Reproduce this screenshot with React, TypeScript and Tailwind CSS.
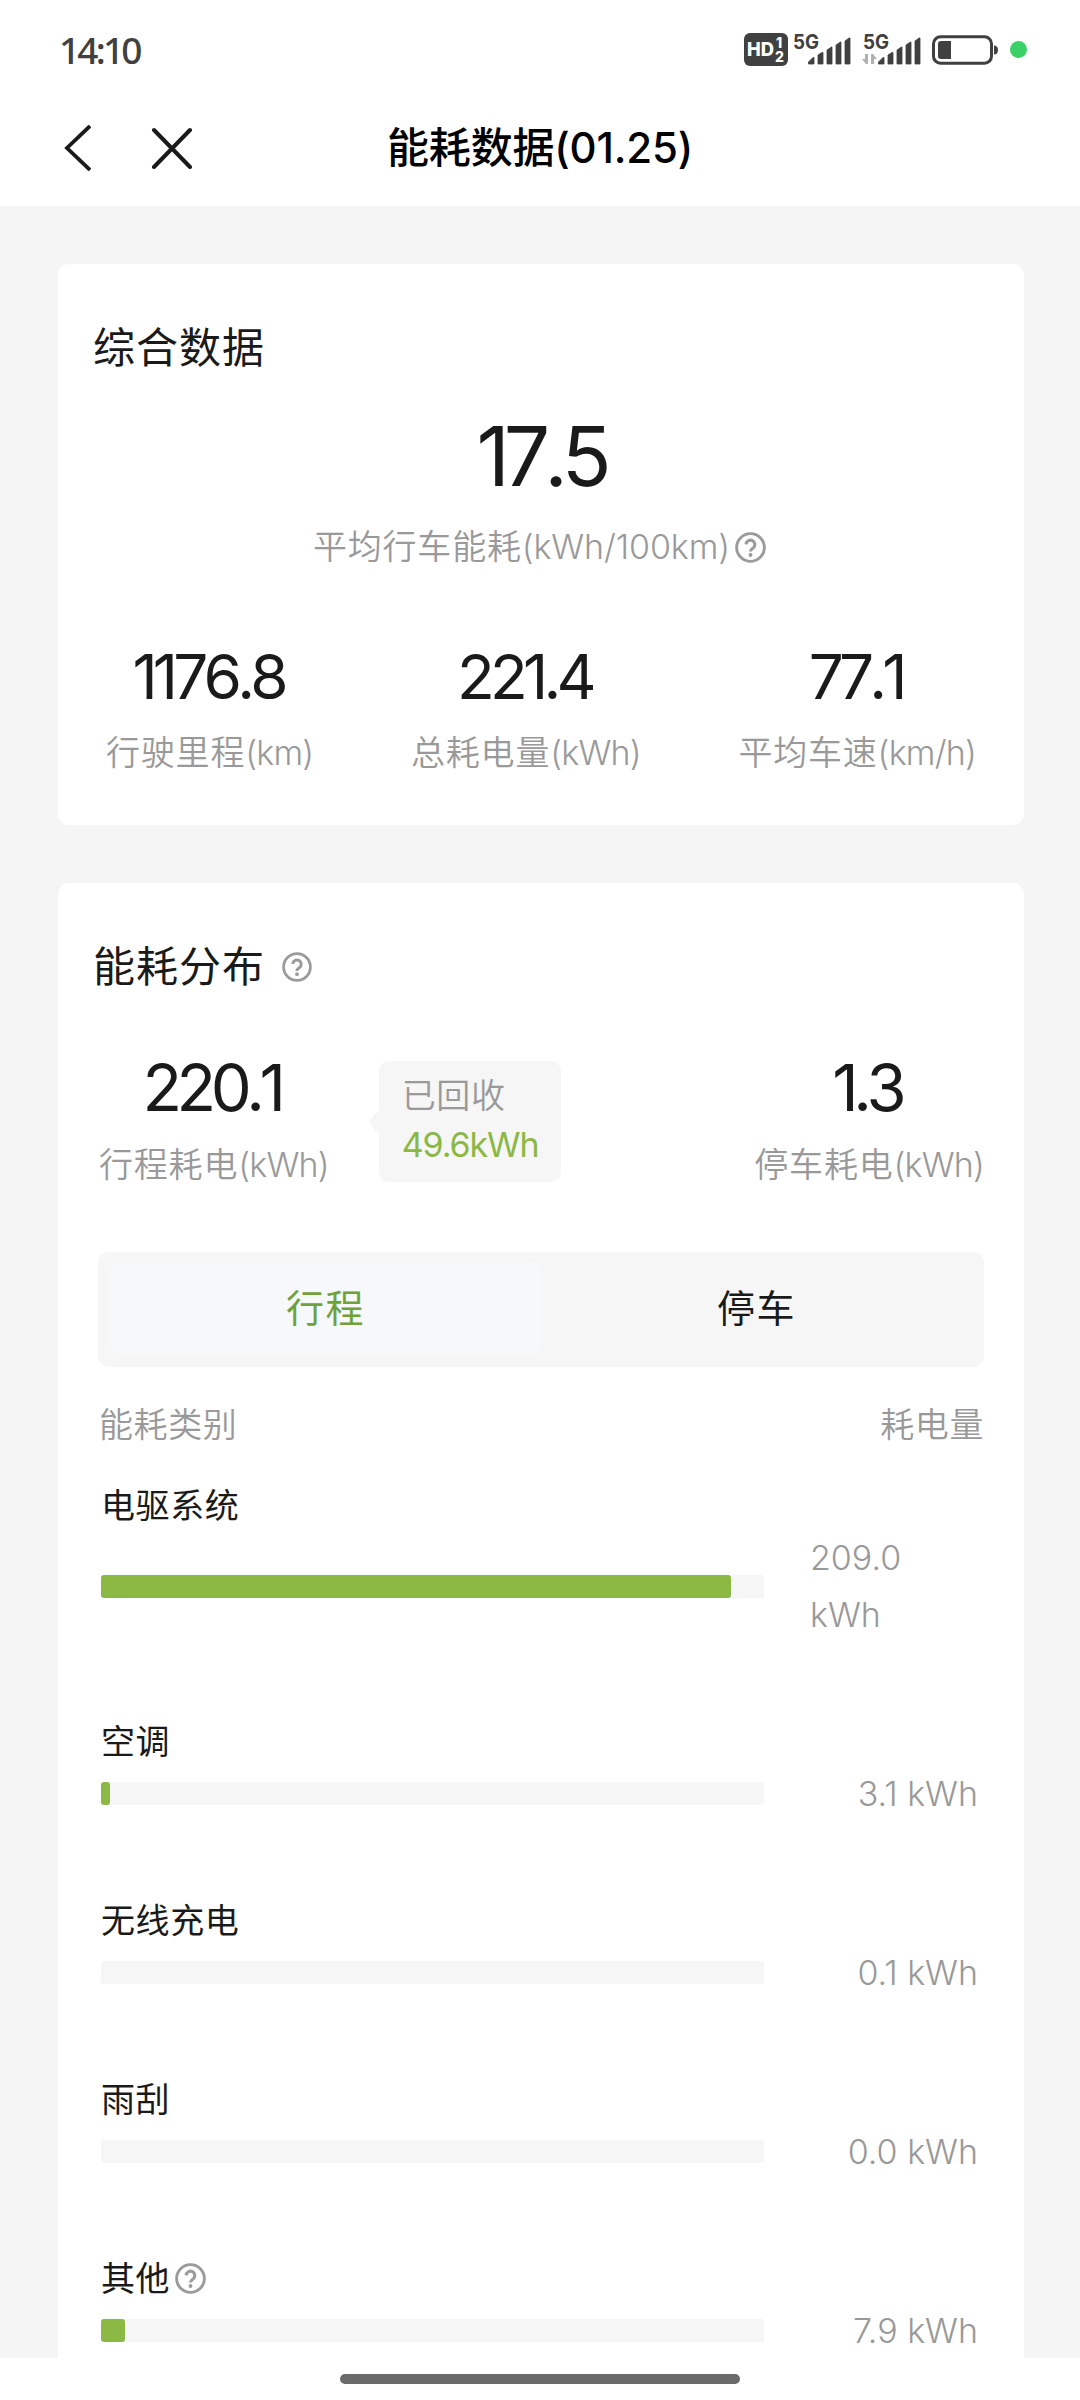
import { clsx } from 'clsx'

const summary = [
  { value: '1176.8', label: '行驶里程', unit: '(km)' },
  { value: '221.4', label: '总耗电量', unit: '(kWh)' },
  { value: '77.1', label: '平均车速', unit: '(km/h)' },
]

const items = [
  { name: '电驱系统', value: '209.0', width: 630, wrap: true },
  { name: '空调', value: '3.1', width: 9 },
  { name: '无线充电', value: '0.1', width: 0 },
  { name: '雨刮', value: '0.0', width: 0 },
  { name: '其他', value: '7.9', width: 24, help: true },
]

function HelpIcon({ className }: { className?: string }) {
  return (
    <svg viewBox="0 0 30 30" fill="none" stroke="#9b9b9b" className={clsx('shrink-0', className)}>
      <circle cx="15" cy="15" r="13.4" strokeWidth="2.8" />
      <path d="M10.8 12a4.2 4.2 0 1 1 6.7 3.500c-1.600 1.100-2.500 1.600-2.500 3.400" strokeWidth="3" />
      <circle cx="15" cy="22.2" r="1.9" fill="#9b9b9b" stroke="none" />
    </svg>
  )
}

function Signal({ data }: { data?: boolean }) {
  return (
    <svg width="60" height="50" viewBox="0 -8 60 50" fill="#404040">
      <text x="1" y="16" fontSize="20" fontWeight="700" textLength="26" lengthAdjust="spacingAndGlyphs">
        5G
      </text>
      {data && (
        <path d="M6 21v10H4l-4-5h3v-5zM9 31V21h2l4 5h-3v5z" fill="#b0b0b0" />
      )}
      <path d="M16.5 31v-2l4.5-4.5h1V31zM26 31V22l4-2.500h1V31zM35 31V17l4.500-3h.5v17zM44 31V12l4.500-3h.5v22zM53 31V8l4-3h1v26z" stroke="#404040" strokeWidth=".8" strokeLinejoin="round" />
    </svg>
  )
}

function StatusBar() {
  return (
    <div className="flex h-[99px] items-center justify-between pl-[59px] pr-[53px]">
      <span className="font-['Noto_Sans'] text-[37px] font-medium tracking-[-2.8px] text-[#404040]">14:10</span>
      <div className="flex items-center">
        <svg width="44" height="33" viewBox="0 0 44 33">
          <rect width="44" height="33" rx="6" fill="#404040" />
          <g fill="#fff" fontWeight="800">
            <text x="3" y="23" fontSize="19" textLength="27" lengthAdjust="spacingAndGlyphs">HD</text>
            <text x="32" y="15" fontSize="14">1</text>
            <text x="31" y="29" fontSize="14">2</text>
          </g>
        </svg>
        <div className="ml-[4px]"><Signal /></div>
        <div className="ml-[10px]"><Signal data /></div>
        <svg width="68" height="30" viewBox="0 0 68 30" className="ml-[10px]">
          <rect x="1.500" y="1.800" width="58" height="26.400" rx="7" fill="none" stroke="#404040" strokeWidth="3" />
          <path d="M9 6h10v18H9a3 3 0 0 1-3-3V9a3 3 0 0 1 3-3z" fill="#404040" />
          <path d="M62 10.500c2.500 0 4 1.500 4 4.500s-1.500 4.500-4 4.500z" fill="#404040" />
        </svg>
        <span className="ml-[10px] size-[17px] rounded-full bg-[#3ad267]" />
      </div>
    </div>
  )
}

function NavBar() {
  return (
    <div className="grid h-[107px] grid-cols-[1fr_auto_1fr] items-start px-[63px] pt-[20px]">
      <div className="flex h-[58px] items-center gap-[60px]">
        <svg width="28" height="46" viewBox="0 0 28 46" fill="none" stroke="#1a1a1a" strokeWidth="3.800">
          <path d="M27 1 4 23l23 22" />
        </svg>
        <svg width="42" height="42" viewBox="0 0 42 42" fill="none" stroke="#1a1a1a" strokeWidth="4" strokeLinecap="round">
          <path d="m3 3 36 37M39 3 3 40" />
        </svg>
      </div>
      <h1 className="text-[42px] font-medium leading-[58px] tracking-[-0.2px] text-black">能耗数据(01.25)</h1>
    </div>
  )
}

function Label({ label, unit, wide }: { label: string; unit: string; wide?: boolean }) {
  return (
    <span className="text-[34px] font-[350] leading-[46px] tracking-[0.8px] text-[#999]">
      {label}
      <span className={wide ? 'tracking-[-0.1px]' : 'tracking-[-0.8px]'}>{unit}</span>
    </span>
  )
}

type StatProps = { value: string; label: string; unit: string; large?: boolean }

function Stat({ value, label, unit, large }: StatProps) {
  return (
    <div className="flex flex-col items-center">
      <span
        className={clsx(
          'mb-[22px] [font-kerning:none]',
          large
            ? 'pr-[5px] text-[65px] leading-[64px] tracking-[-5.500px]'
            : 'pr-[3px] text-[62px] leading-[62px] tracking-[-4.800px]'
        )}
      >
        {value}
      </span>
      <Label label={label} unit={unit} />
    </div>
  )
}

function Summary() {
  return (
    <section className="h-[561px] rounded-[11px] bg-white pt-[55px]">
      <h2 className="pl-[35px] text-[42px] leading-[57px] tracking-[1px]">综合数据</h2>
      <div className="mt-[39px] text-center text-[82px] leading-[84px] tracking-[-6px] [font-kerning:none]">17.5</div>
      <div className="mt-[25px] flex items-center justify-center pr-[3px]">
        <Label label="平均行车能耗" unit="(kWh/100km)" wide />
        <HelpIcon className="ml-[5px] size-[31px]" />
      </div>
      <div className="mt-[76px] flex justify-between pl-[48px] pr-[48px]">
        {summary.map((s) => (
          <Stat key={s.label} {...s} />
        ))}
      </div>
    </section>
  )
}

function Distribution() {
  return (
    <section className="mt-[58px] rounded-t-[11px] bg-white pt-[55px]">
      <div className="flex items-center pl-[35px]">
        <h2 className="text-[42px] leading-[57px] tracking-[1px]">能耗分布</h2>
        <HelpIcon className="ml-[17px] size-[30px]" />
      </div>

      <div className="mt-[61px] flex items-start pl-[41px] pr-[40px]">
        <Stat value="220.1" label="行程耗电" unit="(kWh)" large />
        <div className="ml-[40px] flex items-center pt-[5px]">
          <svg width="10" height="24" viewBox="0 0 10 24" fill="#f6f6f6">
            <path d="M10 0v24L1 14q-2-2 0-4z" />
          </svg>
          <div className="h-[121px] w-[182px] rounded-[10px] bg-[#f6f6f6] pl-[23px] pt-[10px] text-[34px] leading-[49px]">
            <div className="font-[350] tracking-[0.6px] text-[#999]">已回收</div>
            <div className="tracking-[-1.100px] text-[#8bb845]">49.6kWh</div>
          </div>
        </div>
        <div className="ml-auto">
          <Stat value="1.3" label="停车耗电" unit="(kWh)" large />
        </div>
      </div>

      <div className="mx-[40px] mt-[64px] grid h-[115px] grid-cols-2 rounded-[11px] bg-[#f6f6f6] px-[12px] pb-[13px] pt-[11px] text-[38px] tracking-[1.500px]">
        <button className="rounded-[8px] bg-[#f6f8f9] text-[#6fa23c]">行程</button>
        <button className="text-[#1a1a1a]">停车</button>
      </div>

      <div className="mt-[35px] flex justify-between pl-[41px] pr-[40px] text-[34px] font-[350] leading-[46px] tracking-[0.6px] text-[#999]">
        <span>能耗类别</span>
        <span>耗电量</span>
      </div>

      <div className="mt-[35px] flex flex-col gap-[76px] pl-[43px] pr-[46px]">
        {items.map((item) => (
          <div key={item.name}>
            <div className="flex h-[46px] items-center text-[34px] leading-[46px] tracking-[0.6px]">
              {item.name}
              {item.help && <HelpIcon className="-mt-[2px] ml-[5px] size-[31px]" />}
            </div>
            <div className="flex items-center justify-between">
              <div className="h-[23px] w-[663px] rounded-[3px] bg-[#f6f6f6]">
                <div className="h-full rounded-[3px] bg-[#8bb944]" style={{ width: item.width }} />
              </div>
              <div className={clsx('w-[168px] text-[34px] font-[350] leading-[57px] text-[#999]', !item.wrap && 'text-right')}>
                {item.value} {item.wrap && <br />}kWh
              </div>
            </div>
          </div>
        ))}
      </div>
    </section>
  )
}

export default function App() {
  return (
    <div className="flex h-[2400px] w-[1080px] flex-col overflow-hidden bg-white font-[Inter,'Noto_Sans_CJK_SC',sans-serif] text-[#1a1a1a]">
      <StatusBar />
      <NavBar />
      <main className="min-h-0 flex-1 overflow-hidden bg-[#f5f5f5] pl-[58px] pr-[56px] pt-[58px]">
        <Summary />
        <Distribution />
      </main>
      <div className="flex h-[42px] shrink-0 justify-center pt-[16px]">
        <div className="h-[10px] w-[400px] rounded-full bg-[#6a6a6a]" />
      </div>
    </div>
  )
}
